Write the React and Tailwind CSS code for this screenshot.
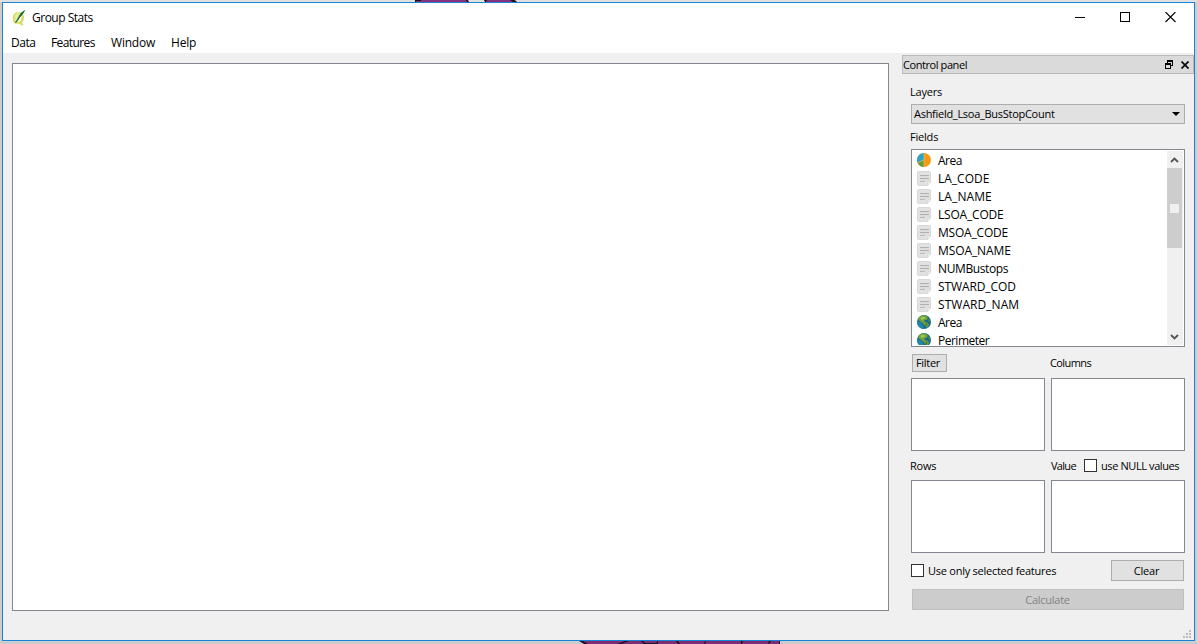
// App.jsx - Group Stats window with the control panel docked on the right
import React, { useState } from 'react';

const FIELDS = [
  { name: 'Area', icon: 'pie', spacing: 'tracking-[-0.5px]' },
  { name: 'LA_CODE', icon: 'text', spacing: 'tracking-[0px]' },
  { name: 'LA_NAME', icon: 'text', spacing: 'tracking-[0.1px]' },
  { name: 'LSOA_CODE', icon: 'text', spacing: 'tracking-[-0.2px]' },
  { name: 'MSOA_CODE', icon: 'text', spacing: 'tracking-[-0.2px]' },
  { name: 'MSOA_NAME', icon: 'text', spacing: 'tracking-[-0.1px]' },
  { name: 'NUMBustops', icon: 'text', spacing: 'tracking-[-0.4px]' },
  { name: 'STWARD_COD', icon: 'text', spacing: 'tracking-[-0.1px]' },
  { name: 'STWARD_NAM', icon: 'text', spacing: 'tracking-[0.05px]' },
  { name: 'Area', icon: 'globe', spacing: 'tracking-[-0.5px]' },
  { name: 'Perimeter', icon: 'globe', spacing: 'tracking-[-0.5px]' },
];

const PieIcon = () => (
  <svg width="14" height="14" viewBox="0 0 14 14">
    <circle cx="7" cy="7" r="7" fill="#f59a14" />
    <path d="M7 7V0A7 7 0 0 0 .6 9.800z" fill="#2fa3c0" />
    <path d="M7 7L.6 9.800A7 7 0 0 0 7 14z" fill="#6f9a32" />
    <path d="M7 0v14M7 7L.6 9.800" stroke="#fbd58a" strokeWidth=".5" />
  </svg>
);

const TextIcon = () => (
  <svg width="14" height="15" viewBox="0 0 14 15">
    <path d="M1.500.5h11q1 0 1 1V11l-3 3.500h-9q-1 0-1-1v-12q0-1 1-1z" fill="#e2e2e2" stroke="#d8d8d8" />
    <path d="M13.500 11l-3 3.500V11z" fill="#f8f8f8" stroke="#cacaca" strokeWidth=".5" />
    <path d="M3 4.500h9M3 7.500h9" stroke="#b0b0b0" />
    <path d="M3 6h9M3 9h9" stroke="#cfcfcf" strokeWidth=".5" />
    <path d="M3 10.500h5" stroke="#b8b8b8" />
  </svg>
);

const GlobeIcon = () => (
  <svg width="14" height="14" viewBox="0 0 14 14">
    <circle cx="7" cy="7" r="7" fill="#17699a" />
    <path d="M0 7a7 7 0 0 0 7 7l-1-4-3-3z" fill="#2386ad" />
    <path d="M2 2.200Q5-.5 9 .4L11 3 9.500 5 7 5.500 8 7l3 1 1 2-2 3.300-1.500-2.300L5.500 8 2.500 6 1 4z" fill="#70a436" />
    <path d="M3.500 2.500L7 1.800 8.500 3 6.500 4.500 4 4.500z" fill="#a3c94f" />
    <path d="M8 8.500l2.500.5-.8 3z" fill="#427a31" />
    <path d="M11.500 3l2 2.500-.5 2-1.700-2z" fill="#4e8d38" />
  </svg>
);

const ICONS = { pie: PieIcon, text: TextIcon, globe: GlobeIcon };

const AppIcon = () => (
  <svg width="14" height="16" viewBox="0 0 14 16">
    <path d="M5.500 2C2 2.500.5 6 .8 9.500S4 14.500 7 13.500l2.500 2 2-.8-1.500-2c2-2 2.500-5 1.500-8L9 5c1 3 .5 5-1.500 6.500C5 12.500 3.500 11 3.500 8s1-4 4-4.500z" fill="#d5dc62" />
    <path d="M5 2.500L9 2 5 9 3 11Q1 6 5 2.500z" fill="#e6eb96" />
    <path d="M13 0L8.500 3 6 7.500 2.500 13.500 5 12l3-5 3-3z" fill="#2c7a34" />
    <path d="M12.500.5L5.500 10" stroke="#0b5628" strokeWidth=".8" />
  </svg>
);

// Map canvas showing behind the top and bottom edges of the window
const MapEdges = () => (
  <svg className="absolute left-0 top-0" width="1197" height="644" viewBox="0 0 1197 644">
    <path d="M0 0h1197v2H0z" fill="#e0e0e0" />
    <path d="M415 0h53v2h-53zM485 0h30l2 2h-32z" fill="#84307f" />
    <path d="M468 0h17v2h-17z" fill="#dfe3dd" />
    <path d="M415 0h1v2h-1zM416 0h5v1h-5zM466 0h2l1 2h-2zM484 0h3l-1 2h-1zM510 0h4l3 2h-4z" fill="#151515" />
    <path d="M579 641h201v3H587z" fill="#7b2e71" />
    <path d="M579 641h4l5 3h-4zM625 641h4l-8 3h-4zM641 641h2l2 2h12v-2h1v3h-14zM676 641h2l2 3h-2zM705 641h1l-1 3h-1zM741 641h2l-1 3h-1zM769 641h2l-2 3h-1zM779 641h1v3h-1z" fill="#1b101b" />
  </svg>
);

const TitleBar = () => (
  <div className="flex h-[28px] shrink-0 items-center justify-between bg-white">
    <div className="flex items-center gap-[6px] pl-[9px] pt-[1px]">
      <AppIcon />
      <span className="text-[12px] leading-[16px] tracking-[-0.5px]">Group Stats</span>
    </div>
    <div className="flex h-full items-start gap-[35px] pr-[18px] pt-[9px]">
      <svg width="10" height="11" viewBox="0 0 10 11" shapeRendering="crispEdges"><path d="M0 5h10v1H0z" /></svg>
      <svg width="10" height="11" viewBox="0 0 10 11" shapeRendering="crispEdges"><path d="M.5.5h9v9h-9z" fill="none" stroke="#000" /></svg>
      <svg width="11" height="11" viewBox="0 0 11 11"><path d="M.5 0l10 10M10.500 0l-10 10" stroke="#000" strokeWidth="1.100" /></svg>
    </div>
  </div>
);

const MenuBar = () => (
  <div className="flex h-[22px] shrink-0 items-center bg-white pl-[8px] pt-[2px] text-[12px] leading-[16px]">
    <span className="w-[40px] tracking-[-0.5px]">Data</span>
    <span className="w-[60px] tracking-[-0.6px]">Features</span>
    <span className="w-[60px] tracking-[-0.2px]">Window</span>
    <span className="tracking-[-0.2px]">Help</span>
  </div>
);

const CheckBox = ({ checked, onChange }) => (
  <button onClick={onChange} className="flex size-[13px] shrink-0 items-center justify-center border border-[#333333] bg-white">
    {checked && <svg width="9" height="9" viewBox="0 0 9 9"><path d="M1 4.500l2.500 2.500L8 1.500" fill="none" stroke="#222" /></svg>}
  </button>
);

const DropBox = () => <div className="h-[73px] w-[134px] border border-[#828790] bg-white" />;

const ScrollBar = () => (
  <div className="my-px mr-px flex w-[16px] shrink-0 flex-col items-start bg-[#f0f0f0]">
    <div className="flex h-[17px] w-[15px] items-center justify-center">
      <svg width="9" height="6" viewBox="0 0 9 6"><path d="M1 5l3.500-3.500L8 5" fill="none" stroke="#555" strokeWidth="1.900" /></svg>
    </div>
    <div className="flex h-[80px] w-[15px] items-center justify-center bg-[#cdcdcd]">
      <div className="size-[9px] bg-[#f0f0f0]" />
    </div>
    <div className="flex-1" />
    <div className="flex h-[17px] w-[15px] items-center justify-center">
      <svg width="9" height="6" viewBox="0 0 9 6"><path d="M1 1l3.500 3.500L8 1" fill="none" stroke="#555" strokeWidth="1.900" /></svg>
    </div>
  </div>
);

const FieldList = () => (
  <div className="flex h-[198px] border border-[#828790] bg-white">
    <div className="my-px flex-1 overflow-hidden text-[12px] leading-[18px]">
      {FIELDS.map((field, i) => {
        const Icon = ICONS[field.icon];
        return (
          <div key={i} className="flex h-[18px] items-center gap-[7px] pl-[5px]">
            <Icon />
            <span className={`pt-px ${field.spacing}`}>{field.name}</span>
          </div>
        );
      })}
    </div>
    <ScrollBar />
  </div>
);

const ControlPanel = () => {
  const [useNull, setUseNull] = useState(false);
  const [onlySelected, setOnlySelected] = useState(false);

  return (
    <div className="flex w-[292px] shrink-0 flex-col pt-[2px] text-[11px] leading-[14px]">
      {/* Dock title */}
      <div className="flex h-[19px] items-center justify-between border border-[#b9b9b9] bg-[#dadada] pr-[4px]">
        <span className="tracking-[-0.42px]">Control panel</span>
        <div className="flex items-center gap-[8px]">
          <svg width="8" height="9" viewBox="0 0 8 9" shapeRendering="crispEdges">
            <path d="M2 0h6v6H6V5h1V2H3v1H2zM0 3h6v6H0zM1 5v3h4V5z" fillRule="evenodd" />
          </svg>
          <svg width="8" height="8" viewBox="0 0 8 8"><path d="M.5.5l7 7M7.500.5l-7 7" stroke="#000" strokeWidth="1.700" /></svg>
        </div>
      </div>

      <div className="flex flex-col pl-[9px] pr-[9px]">
        <span className="-ml-px mt-[11px] tracking-[-0.2px]">Layers</span>
        <div className="mt-[5px] flex h-[20px] items-center justify-between border border-[#adadad] bg-[#e1e1e1] pl-[2px] pr-[4px]">
          <span className="tracking-[-0.28px]">Ashfield_Lsoa_BusStopCount</span>
          <svg width="8" height="4" viewBox="0 0 8 4"><path d="M0 0h8L4 4z" /></svg>
        </div>
        <span className="-ml-px mt-[6px] tracking-[-0.2px]">Fields</span>
        <div className="mt-[5px]"><FieldList /></div>

        <div className="mt-[7px] flex h-[18px] items-center pl-px">
          <button className="h-[18px] w-[35px] border border-[#adadad] bg-[#e1e1e1] pr-[3px] tracking-[-0.3px]">Filter</button>
          <span className="ml-[103px] tracking-[-0.6px]">Columns</span>
        </div>
        <div className="mt-[6px] flex gap-[6px]"><DropBox /><DropBox /></div>

        <div className="mt-[8px] flex h-[14px] items-start">
          <span className="-ml-px w-[141px] tracking-[-0.2px]">Rows</span>
          <span className="w-[33px] tracking-[-0.7px]">Value</span>
          <CheckBox checked={useNull} onChange={() => setUseNull(!useNull)} />
          <span className="ml-[4px] whitespace-nowrap tracking-[-0.4px]">use NULL values</span>
        </div>
        <div className="mt-[7px] flex gap-[6px]"><DropBox /><DropBox /></div>

        <div className="mt-[7px] flex h-[21px] items-center justify-between pr-px">
          <div className="flex items-center gap-[4px]">
            <CheckBox checked={onlySelected} onChange={() => setOnlySelected(!onlySelected)} />
            <span className="tracking-[-0.25px]">Use only selected features</span>
          </div>
          <button className="h-[21px] w-[73px] border border-[#adadad] bg-[#e1e1e1] pr-[2px] tracking-[-0.2px]">Clear</button>
        </div>
        <button disabled className="ml-px mr-px mt-[8px] h-[21px] border border-[#bfbfbf] bg-[#cccccc] pr-px text-[#838383] tracking-[-0.25px]">Calculate</button>
      </div>
    </div>
  );
};

const App = () => (
  <div className="relative h-[644px] w-[1197px] overflow-hidden bg-[#cccccc] pl-[2px] pt-[2px] font-['Open_Sans','Noto_Sans',sans-serif] text-black">
    <MapEdges />
    <div className="relative flex h-[639px] w-[1193px] flex-col border border-[#1883d7] bg-[#f0f0f0]">
      <TitleBar />
      <MenuBar />
      <div className="flex flex-1">
        <div className="ml-[9px] mt-[10px] h-[548px] w-[877px] border border-[#828790] bg-white" />
        <div className="ml-auto flex"><ControlPanel /></div>
      </div>
      {/* Size grip */}
      <svg className="absolute bottom-[2px] right-[3px]" width="8" height="8" viewBox="0 0 8 8" shapeRendering="crispEdges">
        <path d="M6 0h2v2H6zM3 3h2v2H3zM6 3h2v2H6zM0 6h2v2H0zM3 6h2v2H3zM6 6h2v2H6z" fill="#bcbcbc" />
      </svg>
    </div>
  </div>
);

export default App;
